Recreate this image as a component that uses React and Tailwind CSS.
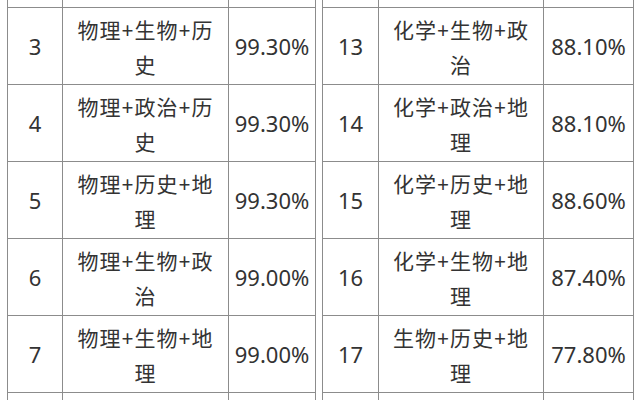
const leftRows = [
  { no: "2", subj: ["物理+化学+政", "治"], rate: "99.50%" },
  { no: "3", subj: ["物理+生物+历", "史"], rate: "99.30%" },
  { no: "4", subj: ["物理+政治+历", "史"], rate: "99.30%" },
  { no: "5", subj: ["物理+历史+地", "理"], rate: "99.30%" },
  { no: "6", subj: ["物理+生物+政", "治"], rate: "99.00%" },
  { no: "7", subj: ["物理+生物+地", "理"], rate: "99.00%" },
  { no: "8", subj: ["物理+政治+地", "理"], rate: "98.70%" },
];

const rightRows = [
  { no: "12", subj: ["化学+生物+历", "史"], rate: "88.50%" },
  { no: "13", subj: ["化学+生物+政", "治"], rate: "88.10%" },
  { no: "14", subj: ["化学+政治+地", "理"], rate: "88.10%" },
  { no: "15", subj: ["化学+历史+地", "理"], rate: "88.60%" },
  { no: "16", subj: ["化学+生物+地", "理"], rate: "87.40%" },
  { no: "17", subj: ["生物+历史+地", "理"], rate: "77.80%" },
  { no: "18", subj: ["生物+政治+地", "理"], rate: "76.90%" },
];

const ScoreTable = ({ rows, cols }) => (
  <table className="table-fixed border-collapse text-[#333]">
    <colgroup>
      {cols.map((w, i) => (
        <col key={i} style={{ width: w }} />
      ))}
    </colgroup>
    <tbody>
      {rows.map((row) => (
        <tr key={row.no} className="h-[77px]">
          <td className="border border-[#8c8c8c] text-center text-[22px] p-0">{row.no}</td>
          <td className="border border-[#8c8c8c] text-center text-[21px] leading-[35px] p-0 pt-[4px] tracking-[1px]">
            {row.subj[0]}
            <br />
            {row.subj[1]}
          </td>
          <td className="border border-[#8c8c8c] text-center text-[22px] p-0">{row.rate}</td>
        </tr>
      ))}
    </tbody>
  </table>
);

export default function App() {
  return (
    <div
      className="w-[640px] h-[400px] overflow-hidden bg-white"
      style={{ fontFamily: '"Noto Sans", "Noto Sans CJK SC", sans-serif' }}
    >
      <div className="flex gap-[6px] pl-[7px] -mt-[70px]">
        <ScoreTable rows={leftRows} cols={[55, 166, 87]} />
        <ScoreTable rows={rightRows} cols={[56, 165, 90]} />
      </div>
    </div>
  );
}
